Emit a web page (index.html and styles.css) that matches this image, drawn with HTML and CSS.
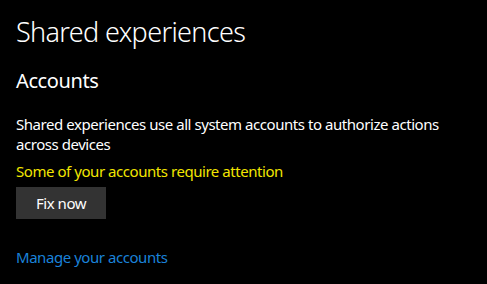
FILE: index.html
```html
<!DOCTYPE html>
<html lang="en">
<head>
    <meta charset="UTF-8">
    <title>Shared experiences</title>
    <link rel="stylesheet" href="styles.css">
</head>
<body>
    <div class="page">
        <h1 class="page-title">Shared experiences</h1>
        <h2 class="section-title">Accounts</h2>
        <p class="desc">Shared experiences use all system accounts to authorize actions across devices</p>
        <p class="warning">Some of your accounts require attention</p>
        <button class="fix-btn">Fix now</button>
        <a class="manage-link" href="#">Manage your accounts</a>
    </div>
</body>
</html>
```

FILE: styles.css
```css
* {
    margin: 0;
    padding: 0;
    box-sizing: border-box;
}

body {
    font-family: "Noto Sans", "Open Sans", sans-serif;
    background-color: #000;
    color: #fff;
    letter-spacing: -0.45px;
}

.page {
    padding: 14px 16px;
    width: 487px;
}

.page-title {
    font-size: 27px;
    font-weight: 300;
    line-height: 36px;
    letter-spacing: -0.65px;
}

.section-title {
    margin-top: 17px;
    font-size: 20px;
    font-weight: normal;
    line-height: 28px;
    letter-spacing: -0.4px;
}

.desc {
    margin-top: 19px;
    font-size: 15px;
    line-height: 20px;
    width: 445px;
}

.warning {
    margin-top: 7px;
    font-size: 15px;
    line-height: 20px;
    color: #f2e600;
}

.fix-btn {
    display: block;
    margin-top: 6px;
    width: 90px;
    height: 32px;
    background-color: #333;
    color: #fff;
    border: none;
    font-family: inherit;
    font-size: 15px;
    letter-spacing: -0.45px;
}

.manage-link {
    display: block;
    margin-top: 28px;
    font-size: 15px;
    line-height: 20px;
    color: #1a82d9;
    text-decoration: none;
}
```
